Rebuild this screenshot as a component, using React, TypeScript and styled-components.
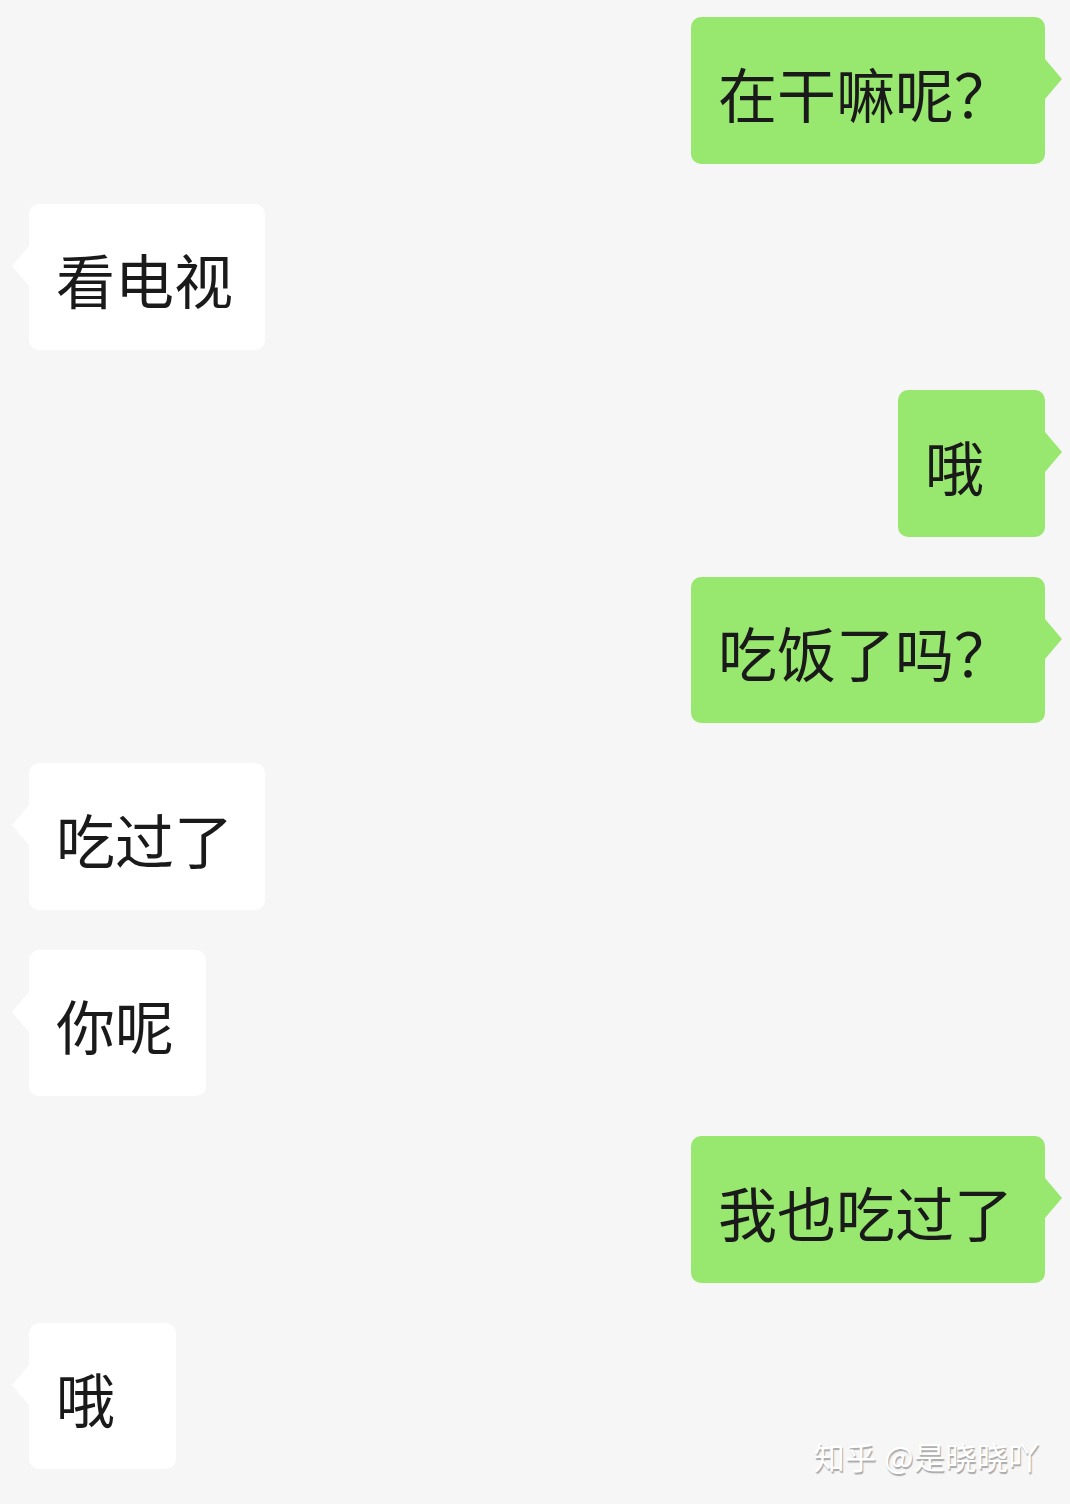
import React from "react";
import styled, { createGlobalStyle, css } from "styled-components";

const GlobalStyle = createGlobalStyle`
    html, body {
        margin: 0;
        padding: 0;
        background: #f6f6f6;
    }
`;

const Screen = styled.div`
    position: relative;
    width: 1070px;
    height: 1504px;
    overflow: hidden;
    background: #f6f6f6;
    font-family: "Noto Sans CJK SC", "Noto Sans", sans-serif;
`;

const Thread = styled.div`
    display: flex;
    flex-direction: column;
    gap: 40px;
    padding: 17px 25px 0 29px;
`;

const Row = styled.div<{ mine?: boolean }>`
    display: flex;
    justify-content: ${({ mine }) => (mine ? "flex-end" : "flex-start")};
`;

const Bubble = styled.div<{ mine?: boolean }>`
    position: relative;
    box-sizing: border-box;
    height: 146.5px;
    min-width: 147px;
    padding: 4px 32px 0 27px;
    display: flex;
    align-items: center;
    justify-content: flex-start;
    border-radius: 10px;
    font-size: 59px;
    color: #1a1a1a;
    white-space: nowrap;
    background: ${({ mine }) => (mine ? "#98e86f" : "#ffffff")};

    /* tail */
    &::after {
        content: "";
        position: absolute;
        top: 42px;
        width: 0;
        height: 0;
        border-top: 20px solid transparent;
        border-bottom: 20px solid transparent;
        ${({ mine }) =>
            mine
                ? css`
                      left: 100%;
                      border-left: 17px solid #98e86f;
                  `
                : css`
                      right: 100%;
                      border-right: 17px solid #ffffff;
                  `};
    }
`;

const Watermark = styled.div`
    position: absolute;
    right: 30px;
    bottom: 26px;
    font-size: 31px;
    color: #ffffff;
    letter-spacing: 0.5px;
    text-shadow: 1px 2px 1px #a8a8a8;
`;

const messages: { mine: boolean; text: string }[] = [
    { mine: true, text: "在干嘛呢？" },
    { mine: false, text: "看电视" },
    { mine: true, text: "哦" },
    { mine: true, text: "吃饭了吗？" },
    { mine: false, text: "吃过了" },
    { mine: false, text: "你呢" },
    { mine: true, text: "我也吃过了" },
    { mine: false, text: "哦" },
];

export default function App() {
    return (
        <>
            <GlobalStyle />
            <Screen>
                <Thread>
                    {messages.map((m, i) => (
                        <Row key={i} mine={m.mine}>
                            <Bubble mine={m.mine}>{m.text}</Bubble>
                        </Row>
                    ))}
                </Thread>
                <Watermark>知乎 @是晓晓吖</Watermark>
            </Screen>
        </>
    );
}
